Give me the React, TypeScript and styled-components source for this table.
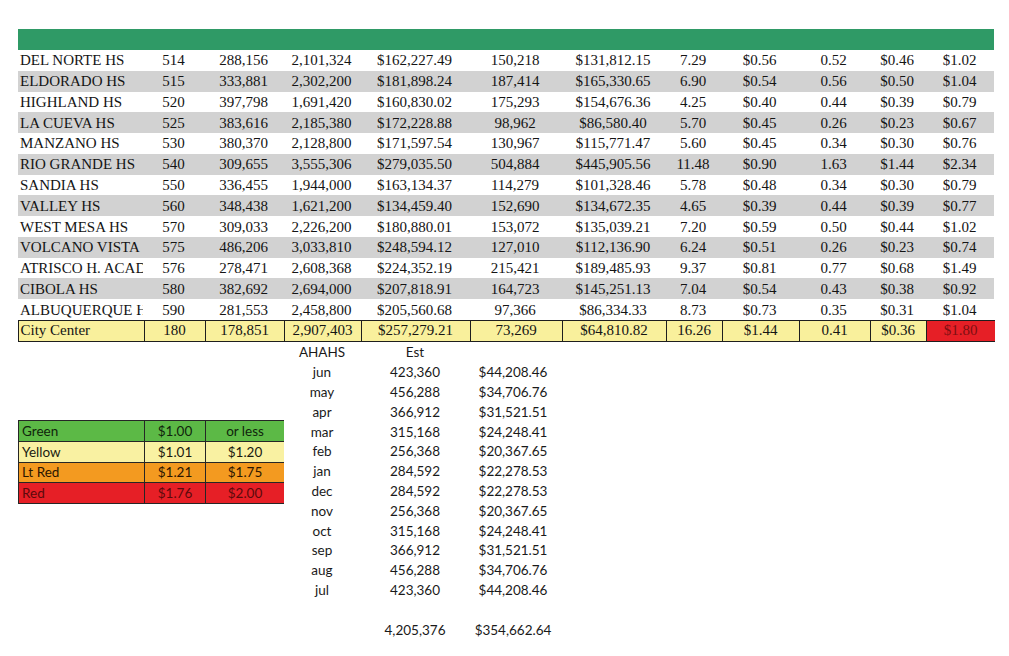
import React from "react";
import styled, { createGlobalStyle } from "styled-components";

const Global = createGlobalStyle`
  html, body { margin: 0; padding: 0; background: #ffffff; }
  body { width: 1009px; height: 656px; overflow: hidden; }
`;

const COLS = "125px 61px 79px 77px 109px 92px 104px 56px 77px 71px 56px 69px";

const Page = styled.div`
  box-sizing: border-box;
  width: 1009px;
  padding: 29px 0 0 18px;
`;

const Sheet = styled.div`
  width: 976px;
  font-family: "Liberation Serif", "Times New Roman", serif;
  font-size: 15px;
  color: #141414;
`;

const GreenBar = styled.div`
  height: 21px;
  background: #2f9a66;
`;

const Row = styled.div<{ $shade?: boolean }>`
  display: grid;
  grid-template-columns: ${COLS};
  height: 20.77px;
  align-items: center;
  background: ${(p) => (p.$shade ? "#d2d2d2" : "transparent")};
`;

const Cell = styled.div<{ $left?: boolean }>`
  text-align: ${(p) => (p.$left ? "left" : "center")};
  padding-left: ${(p) => (p.$left ? "2px" : "0")};
  white-space: nowrap;
  overflow: hidden;
  line-height: 20px;
`;

const TotalRow = styled.div`
  display: grid;
  grid-template-columns: ${COLS};
  box-sizing: border-box;
  width: 977px;
  height: 22px;
  margin-left: -0.5px;
  border: 1.5px solid #1e1e1e;
  background: #f9f09c;
`;

const TotalCell = styled.div<{ $left?: boolean; $alert?: boolean }>`
  display: flex;
  align-items: center;
  justify-content: ${(p) => (p.$left ? "flex-start" : "center")};
  padding-left: ${(p) => (p.$left ? "2px" : "0")};
  border-left: ${(p) => (p.$left ? "none" : "1.5px solid #1e1e1e")};
  background: ${(p) => (p.$alert ? "#e61f26" : "transparent")};
  color: ${(p) => (p.$alert ? "#7d0f12" : "#141414")};
  white-space: nowrap;
  line-height: 19px;
`;

const Lower = styled.div`
  display: flex;
  align-items: flex-start;
  padding-top: 0.5px;
`;

const LegendWrap = styled.div`
  width: 265px;
  padding-top: 78px;
`;

const Legend = styled.div`
  display: grid;
  grid-template-columns: 125px 61px 79px;
  box-sizing: border-box;
  width: 266px;
  border: 1.5px solid #262626;
  font-family: Lato, "Open Sans", sans-serif;
  font-size: 13.5px;
`;

const LegendCell = styled.div<{ $bg: string; $fg: string; $left?: boolean; $first?: boolean; $top?: boolean }>`
  height: 19.6px;
  display: flex;
  align-items: center;
  justify-content: ${(p) => (p.$left ? "flex-start" : "center")};
  padding-left: ${(p) => (p.$left ? "3px" : "0")};
  background: ${(p) => p.$bg};
  color: ${(p) => p.$fg};
  border-left: ${(p) => (p.$first ? "none" : "1.5px solid #262626")};
  border-top: ${(p) => (p.$top ? "none" : "1px solid #262626")};
`;

const Monthly = styled.div`
  display: grid;
  grid-template-columns: 78px 108px 88px;
  grid-auto-rows: 19.8px;
  align-items: center;
  font-family: Lato, "Open Sans", sans-serif;
  font-size: 13.5px;
  color: #1a1a1a;
`;

const MCell = styled.div`
  text-align: center;
  white-space: nowrap;
`;

type School = [string, string, string, string, string, string, string, string, string, string, string, string];

const schools: School[] = [
  ["DEL NORTE HS", "514", "288,156", "2,101,324", "$162,227.49", "150,218", "$131,812.15", "7.29", "$0.56", "0.52", "$0.46", "$1.02"],
  ["ELDORADO HS", "515", "333,881", "2,302,200", "$181,898.24", "187,414", "$165,330.65", "6.90", "$0.54", "0.56", "$0.50", "$1.04"],
  ["HIGHLAND HS", "520", "397,798", "1,691,420", "$160,830.02", "175,293", "$154,676.36", "4.25", "$0.40", "0.44", "$0.39", "$0.79"],
  ["LA CUEVA HS", "525", "383,616", "2,185,380", "$172,228.88", "98,962", "$86,580.40", "5.70", "$0.45", "0.26", "$0.23", "$0.67"],
  ["MANZANO HS", "530", "380,370", "2,128,800", "$171,597.54", "130,967", "$115,771.47", "5.60", "$0.45", "0.34", "$0.30", "$0.76"],
  ["RIO GRANDE HS", "540", "309,655", "3,555,306", "$279,035.50", "504,884", "$445,905.56", "11.48", "$0.90", "1.63", "$1.44", "$2.34"],
  ["SANDIA HS", "550", "336,455", "1,944,000", "$163,134.37", "114,279", "$101,328.46", "5.78", "$0.48", "0.34", "$0.30", "$0.79"],
  ["VALLEY HS", "560", "348,438", "1,621,200", "$134,459.40", "152,690", "$134,672.35", "4.65", "$0.39", "0.44", "$0.39", "$0.77"],
  ["WEST MESA HS", "570", "309,033", "2,226,200", "$180,880.01", "153,072", "$135,039.21", "7.20", "$0.59", "0.50", "$0.44", "$1.02"],
  ["VOLCANO VISTA", "575", "486,206", "3,033,810", "$248,594.12", "127,010", "$112,136.90", "6.24", "$0.51", "0.26", "$0.23", "$0.74"],
  ["ATRISCO H. ACADEMY", "576", "278,471", "2,608,368", "$224,352.19", "215,421", "$189,485.93", "9.37", "$0.81", "0.77", "$0.68", "$1.49"],
  ["CIBOLA HS", "580", "382,692", "2,694,000", "$207,818.91", "164,723", "$145,251.13", "7.04", "$0.54", "0.43", "$0.38", "$0.92"],
  ["ALBUQUERQUE HS", "590", "281,553", "2,458,800", "$205,560.68", "97,366", "$86,334.33", "8.73", "$0.73", "0.35", "$0.31", "$1.04"],
];

const cityCenter: School = ["City Center", "180", "178,851", "2,907,403", "$257,279.21", "73,269", "$64,810.82", "16.26", "$1.44", "0.41", "$0.36", "$1.80"];

const legend = [
  { bg: "#5cb946", fg: "#10240c", cells: ["Green", "$1.00", "or less"] },
  { bg: "#f9f1a2", fg: "#1a1a10", cells: ["Yellow", "$1.01", "$1.20"] },
  { bg: "#f39a20", fg: "#2a1500", cells: ["Lt Red", "$1.21", "$1.75"] },
  { bg: "#e61f26", fg: "#5c0a0c", cells: ["Red", "$1.76", "$2.00"] },
];

const months: [string, string, string][] = [
  ["AHAHS", "Est", ""],
  ["jun", "423,360", "$44,208.46"],
  ["may", "456,288", "$34,706.76"],
  ["apr", "366,912", "$31,521.51"],
  ["mar", "315,168", "$24,248.41"],
  ["feb", "256,368", "$20,367.65"],
  ["jan", "284,592", "$22,278.53"],
  ["dec", "284,592", "$22,278.53"],
  ["nov", "256,368", "$20,367.65"],
  ["oct", "315,168", "$24,248.41"],
  ["sep", "366,912", "$31,521.51"],
  ["aug", "456,288", "$34,706.76"],
  ["jul", "423,360", "$44,208.46"],
  ["", "", ""],
  ["", "4,205,376", "$354,662.64"],
];

export default function App() {
  return (
    <Page>
      <Global />
      <Sheet>
        <GreenBar />
        {schools.map((s, i) => (
          <Row key={s[0]} $shade={i % 2 === 1}>
            {s.map((v, j) => (
              <Cell key={j} $left={j === 0}>
                {v}
              </Cell>
            ))}
          </Row>
        ))}
        <TotalRow>
          {cityCenter.map((v, j) => (
            <TotalCell key={j} $left={j === 0} $alert={j === cityCenter.length - 1}>
              {v}
            </TotalCell>
          ))}
        </TotalRow>
      </Sheet>
      <Lower>
        <LegendWrap>
          <Legend>
            {legend.map((r, i) =>
              r.cells.map((c, j) => (
                <LegendCell key={`${i}-${j}`} $bg={r.bg} $fg={r.fg} $left={j === 0} $first={j === 0} $top={i === 0}>
                  {c}
                </LegendCell>
              ))
            )}
          </Legend>
        </LegendWrap>
        <Monthly>
          {months.map((m, i) =>
            m.map((c, j) => <MCell key={`${i}-${j}`}>{c}</MCell>)
          )}
        </Monthly>
      </Lower>
    </Page>
  );
}
